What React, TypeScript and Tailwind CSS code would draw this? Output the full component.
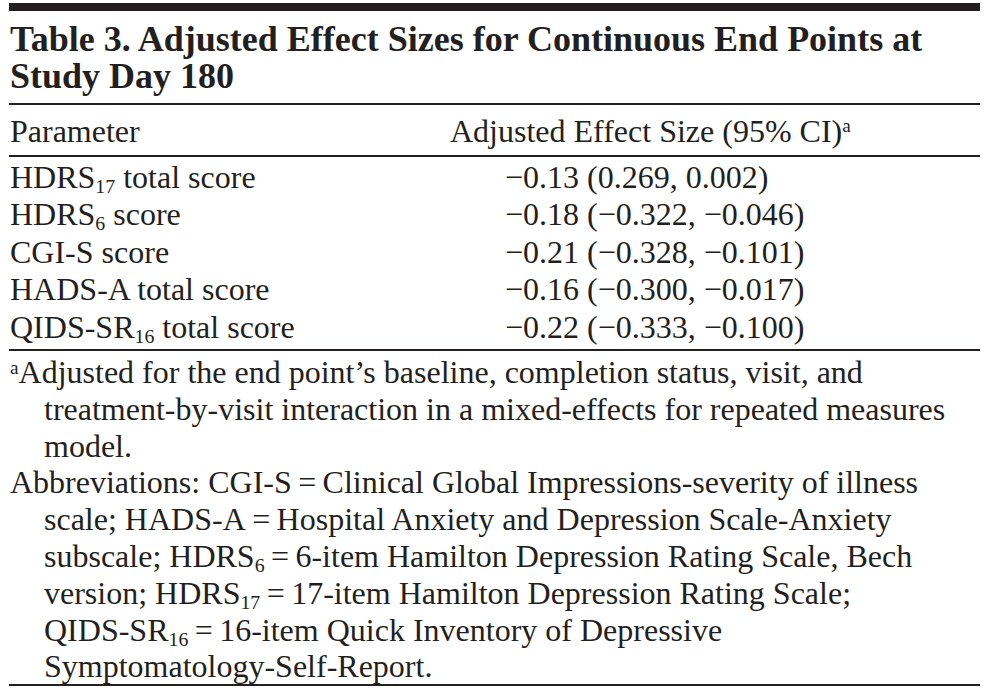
const rows: { label: React.ReactNode; value: string }[] = [
  { label: <>HDRS<Sub>17</Sub> total score</>, value: "\u22120.13 (0.269, 0.002)" },
  { label: <>HDRS<Sub>6</Sub> score</>, value: "\u22120.18 (\u22120.322, \u22120.046)" },
  { label: <>CGI-S score</>, value: "\u22120.21 (\u22120.328, \u22120.101)" },
  { label: <>HADS-A total score</>, value: "\u22120.16 (\u22120.300, \u22120.017)" },
  { label: <>QIDS-SR<Sub>16</Sub> total score</>, value: "\u22120.22 (\u22120.333, \u22120.100)" },
];

function Sub({ children }: { children: React.ReactNode }) {
  return <sub className="text-[0.62em] -bottom-[0.26em]">{children}</sub>;
}

const eq = "\u2009=\u2009";

export default function App() {
  return (
    <div
      className="w-[987px] h-[689px] overflow-hidden bg-white px-[9px] pt-[3px] text-[#231f20]"
      style={{ fontFamily: '"Liberation Serif", "Times New Roman", serif' }}
    >
      <div className="w-[971px]">
        <div className="h-[8px] bg-[#231f20]" />

        <h1 className="mt-[10px] pl-[1px] text-[36px] font-bold leading-[37px]">
          Table 3. Adjusted Effect Sizes for Continuous End Points at
          <br />
          Study Day 180
        </h1>

        <div className="mt-[8px] h-[2px] bg-[#231f20]" />

        <div className="mt-[8px] grid grid-cols-[440px_1fr] pl-[1px] text-[32px] leading-[37.5px]">
          <div>Parameter</div>
          <div>
            Adjusted Effect Size (95% CI)<sup className="text-[0.6em]">a</sup>
          </div>
        </div>

        <div className="mt-[4px] h-[2px] bg-[#231f20]" />

        <div className="pt-[2px] pl-[1px] text-[32px] leading-[37.5px]">
          {rows.map((r, i) => (
            <div key={i} className="grid grid-cols-[495px_1fr] whitespace-nowrap">
              <div>{r.label}</div>
              <div>{r.value}</div>
            </div>
          ))}
        </div>

        <div className="mt-[3px] h-[2px] bg-[#231f20]" />

        <div className="mt-[3px] pl-[1px] text-[32px] leading-[36.8px] whitespace-nowrap">
          <div>
            <sup className="text-[0.6em] -top-[0.45em]">a</sup>Adjusted for the end point’s baseline, completion status, visit, and
          </div>
          <div className="pl-[34px]">treatment-by-visit interaction in a mixed-effects for repeated measures</div>
          <div className="pl-[34px]">model.</div>
          <div>Abbreviations: CGI-S{eq}Clinical Global Impressions-severity of illness</div>
          <div className="pl-[34px]">scale; HADS-A{eq}Hospital Anxiety and Depression Scale-Anxiety</div>
          <div className="pl-[34px]">
            subscale; HDRS<Sub>6</Sub>
            {eq}6-item Hamilton Depression Rating Scale, Bech
          </div>
          <div className="pl-[34px]">
            version; HDRS<Sub>17</Sub>
            {eq}17-item Hamilton Depression Rating Scale;
          </div>
          <div className="pl-[34px]">
            QIDS-SR<Sub>16</Sub>
            {eq}16-item Quick Inventory of Depressive
          </div>
          <div className="pl-[34px]">Symptomatology-Self-Report.</div>
        </div>

        <div className="-mt-[1px] h-[2px] bg-[#231f20]" />
      </div>
    </div>
  );
}
